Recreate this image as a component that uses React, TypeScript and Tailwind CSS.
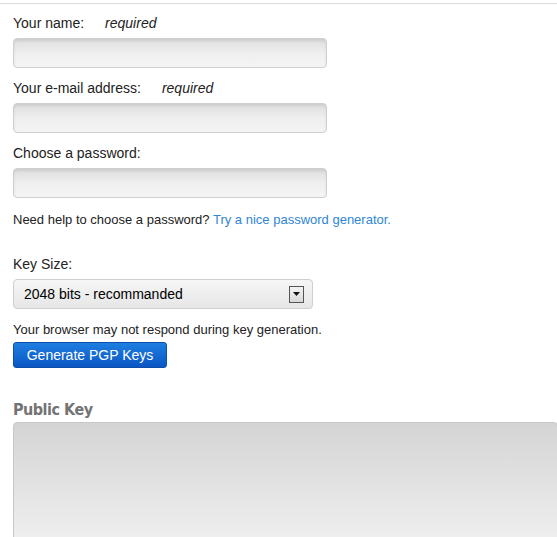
const fieldClass =
  "block h-[30px] w-[314px] rounded-[4px] border border-[#cfcfcf] bg-gradient-to-b from-[#dedede] via-[#efefef] to-[#f4f4f4] shadow-[inset_0_2px_3px_rgba(0,0,0,0.08)]";

function Field({ label, required }: { label: string; required?: boolean }) {
  return (
    <div className="mb-[10px]">
      <div className="flex h-[20px] items-center text-[14px] leading-[20px] text-[#222]">
        <span>{label}</span>
        {required && <span className="ml-[21px] italic">required</span>}
      </div>
      <input type="text" className={`mt-[5px] ${fieldClass}`} />
    </div>
  );
}

export default function App() {
  return (
    <div
      className="min-h-[537px] w-[557px] overflow-hidden bg-white"
      style={{ fontFamily: '"Liberation Sans", Arial, sans-serif' }}
    >
      <div className="h-[3px]" />
      <div className="h-px bg-[#dcdcdc]" />
      <div className="pl-[13px] pt-[9px]">
        <Field label="Your name:" required />
        <Field label="Your e-mail address:" required />
        <Field label="Choose a password:" />

        <p className="mt-[12px] text-[13px] leading-[20px] text-[#222]">
          Need help to choose a password?{" "}
          <a href="#" className="text-[#2f86d6]">
            Try a nice password generator.
          </a>
        </p>

        <div className="mt-[24px] h-[20px] text-[14px] leading-[20px] text-[#222]">
          Key Size:
        </div>
        <div className="mt-[5px] flex h-[30px] w-[300px] items-center justify-between rounded-[4px] border border-[#cfcfcf] bg-gradient-to-b from-[#f6f6f6] to-[#e6e6e6] pl-[10px] pr-[8px] text-[14px] text-black">
          <span>2048 bits - recommanded</span>
          <span className="flex h-[17px] w-[15px] items-center justify-center border border-[#555] bg-gradient-to-b from-[#f4f4f4] to-[#d8d8d8]">
            <svg width="7" height="4" viewBox="0 0 7 4">
              <path d="M0 0h7L3.5 4z" fill="#111" />
            </svg>
          </span>
        </div>

        <p className="mt-[11px] text-[13px] leading-[20px] text-[#222]">
          Your browser may not respond during key generation.
        </p>
        <button className="mt-[2px] h-[26px] w-[154px] rounded-[3px] border border-[#0a4fa8] bg-gradient-to-b from-[#1f7ee0] to-[#0b56c4] text-[14px] text-white">
          Generate PGP Keys
        </button>

        <h2
          className="mt-[31px] h-[22px] text-[16px] font-bold leading-[22px] tracking-[-0.5px] text-[#737373]"
          style={{ fontFamily: '"DejaVu Sans Condensed", "DejaVu Sans", sans-serif', fontStretch: "condensed" }}
        >
          Public Key
        </h2>
        <textarea className="mt-[1px] block h-[140px] w-[545px] resize-none rounded-[4px] border border-[#c8c8c8] bg-gradient-to-b from-[#d4d4d4] to-[#f4f4f4]" />
      </div>
    </div>
  );
}
